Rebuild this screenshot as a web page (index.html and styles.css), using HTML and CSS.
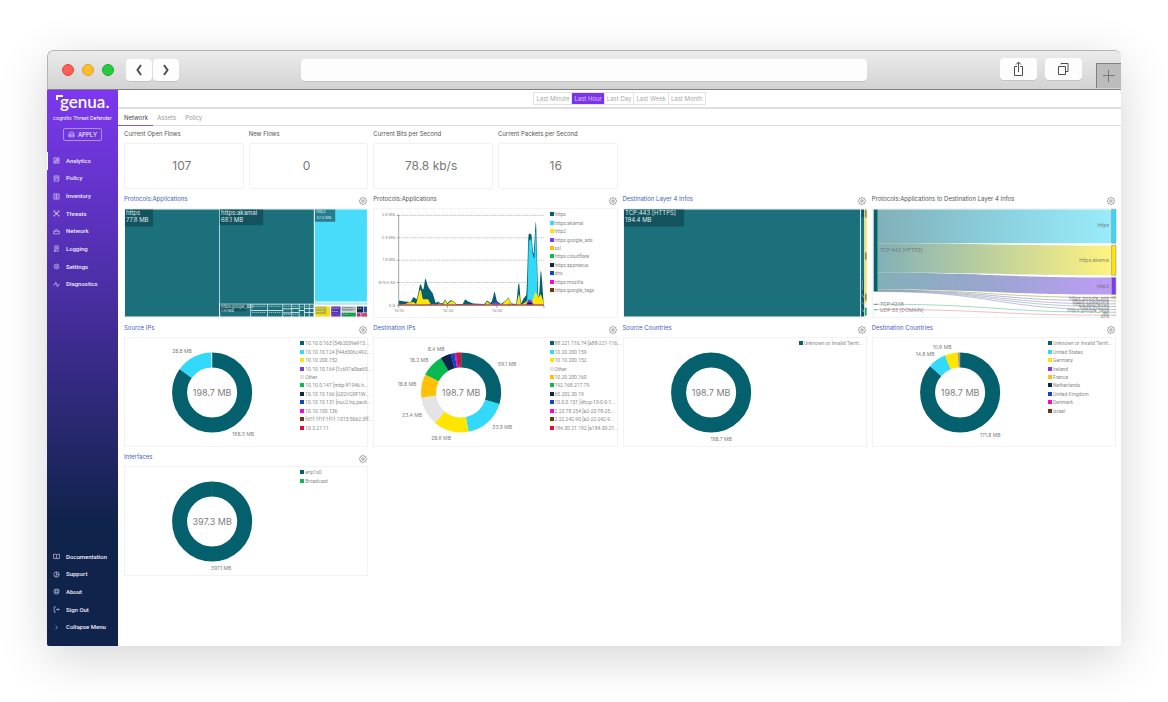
FILE: index.html
```html
<!DOCTYPE html>
<html lang="en">
<head>
<meta charset="utf-8">
<title>cognitix Threat Defender</title>
<link rel="stylesheet" href="styles.css">
</head>
<body>
<svg class="sprite" aria-hidden="true">
  <symbol id="gear" viewBox="0 0 24 24"><path d="M10.3 4.3c.4-1.8 2.9-1.8 3.4 0a1.7 1.7 0 0 0 2.6 1.1c1.5-.9 3.3.8 2.4 2.4a1.7 1.7 0 0 0 1 2.5c1.8.4 1.8 2.9 0 3.4a1.7 1.7 0 0 0-1 2.6c.9 1.5-.8 3.3-2.4 2.4a1.7 1.7 0 0 0-2.6 1c-.4 1.8-2.9 1.8-3.4 0a1.7 1.7 0 0 0-2.6-1c-1.5.9-3.3-.8-2.4-2.4a1.7 1.7 0 0 0-1-2.6c-1.8-.4-1.8-2.9 0-3.4a1.7 1.7 0 0 0 1-2.6c-.9-1.5.8-3.3 2.4-2.4 1 .6 2.3.1 2.6-1z"/><circle cx="12" cy="12" r="3"/></symbol>
  <symbol id="analytics" viewBox="0 0 24 24"><path d="M3 3h8v11H3zM14 3h7v6h-7zM14 12h7v9h-7zM3 17h8v4H3z"/></symbol>
  <symbol id="policy" viewBox="0 0 24 24"><path d="M4 3h16v8H4zM4 11v10h16V11M8 7h8M8 16h2M14 16h2"/></symbol>
  <symbol id="inventory" viewBox="0 0 24 24"><path d="M3 3h18v18H3zM12 3v18M6 8h3M6 12h3M6 16h3M15 8h3M15 12h3M15 16h3"/></symbol>
  <symbol id="threats" viewBox="0 0 24 24"><path d="M3 3l18 18M21 3L3 21M3 8V3h5M16 3h5v5M3 17v4h4M21 17v4h-4"/><circle cx="12" cy="12" r="4"/></symbol>
  <symbol id="network" viewBox="0 0 24 24"><path d="M2 11h20v9H2zM6 11c0-8 12-8 12 0M6 16h1"/></symbol>
  <symbol id="logging" viewBox="0 0 24 24"><path d="M6 3h12v18H6zM9 8h6M9 12h6M9 16h3M3 21h6"/></symbol>
  <symbol id="diagnostics" viewBox="0 0 24 24"><path d="M1 13h5l4-9 5 16 4-8h4"/></symbol>
  <symbol id="docs" viewBox="0 0 24 24"><path d="M2 4h8l2 2 2-2h8v15h-8l-2 2-2-2H2zM12 6v14"/></symbol>
  <symbol id="support" viewBox="0 0 24 24"><circle cx="12" cy="12" r="9"/><path d="M12 3v9h9M8 17h7"/></symbol>
  <symbol id="about" viewBox="0 0 24 24"><circle cx="12" cy="12" r="9"/><circle cx="12" cy="12" r="4"/><path d="M5 5l4 4M15 15l4 4M19 5l-4 4M9 15l-4 4"/></symbol>
  <symbol id="signout" viewBox="0 0 24 24"><path d="M10 3H4v18h6M10 12h11M17 8l4 4-4 4"/></symbol>
  <symbol id="chevron" viewBox="0 0 24 24"><path d="M9 6l6 6-6 6"/></symbol>
  <symbol id="apply" viewBox="0 0 24 24"><path d="M3 11l4-7h10l4 7v9H3zM3 11h18M3 16h18"/></symbol>
</svg>

<div class="window">
  <header class="titlebar">
    <div class="lights"><span class="light red"></span><span class="light amber"></span><span class="light green"></span></div>
    <div class="history">
      <button class="chrome-btn" aria-label="Back"><svg viewBox="0 0 12 16"><path d="M8 3L4.500 8 8 13" /></svg></button>
      <button class="chrome-btn" aria-label="Forward"><svg viewBox="0 0 12 16"><path d="M4 3l3.500 5L4 13"/></svg></button>
    </div>
    <input class="address" type="text" aria-label="Address">
    <div class="actions">
      <button class="chrome-btn wide thin" aria-label="Share"><svg viewBox="0 0 16 18"><path d="M6 6.500H3.500v9h8v-9H9M7.500 12V2M5 4.500L7.500 2 10 4.500"/></svg></button>
      <button class="chrome-btn wide thin" aria-label="Show tabs"><svg viewBox="0 0 16 18"><path d="M2.500 6.500h7v8h-7zM5 4.500V3.500h7v8h-2"/></svg></button>
    </div>
    <button class="new-tab" aria-label="New tab"><svg viewBox="0 0 12 12"><path d="M5.500 0v12M0 5.500h12"/></svg></button>
  </header>

  <div class="app">
    <aside class="sidebar">
      <div class="brand"><svg class="brand-mark" viewBox="0 0 8 6"><path d="M1 5V1h6"/></svg>genua.</div>
      <p class="product">cognitix Threat Defender</p>
      <button class="apply"><svg class="icon"><use href="#apply"/></svg>APPLY</button>
      <nav class="menu menu-main">
        <a class="current" href="#"><svg class="icon"><use href="#analytics"/></svg>Analytics</a>
        <a href="#"><svg class="icon"><use href="#policy"/></svg>Policy</a>
        <a href="#"><svg class="icon"><use href="#inventory"/></svg>Inventory</a>
        <a href="#"><svg class="icon"><use href="#threats"/></svg>Threats</a>
        <a href="#"><svg class="icon"><use href="#network"/></svg>Network</a>
        <a href="#"><svg class="icon"><use href="#logging"/></svg>Logging</a>
        <a href="#"><svg class="icon"><use href="#gear"/></svg>Settings</a>
        <a href="#"><svg class="icon"><use href="#diagnostics"/></svg>Diagnostics</a>
      </nav>
      <nav class="menu menu-foot">
        <a href="#"><svg class="icon"><use href="#docs"/></svg>Documentation</a>
        <a href="#"><svg class="icon"><use href="#support"/></svg>Support</a>
        <a href="#"><svg class="icon"><use href="#about"/></svg>About</a>
        <a href="#"><svg class="icon"><use href="#signout"/></svg>Sign Out</a>
        <a href="#"><svg class="icon"><use href="#chevron"/></svg>Collapse Menu</a>
      </nav>
    </aside>

    <main class="main">
      <div class="range-bar">
        <div class="range">
          <button>Last Minute</button><button class="selected">Last Hour</button><button>Last Day</button><button>Last Week</button><button>Last Month</button>
        </div>
      </div>
      <nav class="tabs"><a class="current" href="#">Network</a><a href="#">Assets</a><a href="#">Policy</a></nav>

      <div class="metrics">
        <section><h2>Current Open Flows</h2><p class="metric">107</p></section>
        <section><h2>New Flows</h2><p class="metric">0</p></section>
        <section><h2>Current Bits per Second</h2><p class="metric">78.8 kb/s</p></section>
        <section><h2>Current Packets per Second</h2><p class="metric">16</p></section>
      </div>

      <div class="widgets">
        <section>
          <header class="widget-head"><h2><a href="#">Protocols:Applications</a></h2><button class="gear" aria-label="Configure"><svg><use href="#gear"/></svg></button></header>
          <div class="card">
            <svg class="chart" viewBox="0 0 244 109">
              <g transform="translate(-6 -18) scale(.33333)">
                <g class="teal-tile">
                  <path d="M21 57h282v321H21zM305 57h282v283H305zM306 342h91v36h-91zM399 342h48v17h-48zM399 361h48v17h-48zM449 342h44v17h-44zM449 361h44v17h-44zM495 342h25v12h-25zM495 356h25v10h-25zM495 368h25v10h-25zM522 342h20v11h-20zM522 355h20v10h-20zM522 367h20v11h-20zM544 342h14v17h-14zM544 361h14v17h-14zM560 342h12v11h-12zM560 355h12v10h-12zM560 367h12v11h-12zM574 342h12v11h-12zM574 355h12v10h-12zM574 367h12v11h-12z"/>
                </g>
                <path fill="#48dcfa" d="M590 57h156v276H590z"/>
                <path fill="#8dd9e4" d="M590 336h156v6H590z"/>
                <path class="tile-lines" d="M592 339h152M402 347h42M402 366h42M452 347h38M452 366h38M497 347h21M524 347h16M546 349h10M562 347h8M576 347h8M497 371h21M524 371h16"/>
                <path fill="#f2dc1e" d="M591 348h45v30h-45z"/><path fill="#6c36c8" d="M639 348h28v30h-28z"/>
                <path fill="#b9b9b9" d="M670 348h43v15h-43z"/><path fill="#16a34f" d="M670 366h43v12h-43z"/>
                <path fill="#18274e" d="M716 348h19v18h-19z"/><path fill="#1d4c9e" d="M737 348h9v18h-9z"/>
                <path fill="#d311a8" d="M716 368h11v10h-11z"/><path fill="#b52f43" d="M729 368h17v10h-17z"/>
                <path class="label-back" d="M21 57h84v51H21zM305 57h130v47H305zM590 57h61v37h-61zM306 342h80v20h-80z"/>
                <path class="label-back soft" d="M592 348h32v22h-32zM640 348h25v20h-25zM671 349h32v11h-32zM671 367h26v9h-26zM718 349h14v15h-14z"/>
                <path class="tile-lines" d="M595 353h25M595 363h22M642 353h20M642 363h18M674 354h30M674 371h20M719 354h12M731 373h12"/>
              </g>
              <g class="tile-text"><text x="2" y="7">https</text><text x="2" y="14">77.8 MB</text><text x="97" y="7">https:akamai</text><text x="97" y="14">68.1 MB</text></g>
              <g class="tile-tiny"><text x="192" y="5">http2</text><text x="192" y="11">37.3 MB</text><text x="97" y="99">https:google_ads</text><text x="97" y="103">7.6 MB</text></g>
            </svg>
          </div>
        </section>

        <section>
          <header class="widget-head"><h2>Protocols:Applications</h2><button class="gear" aria-label="Configure"><svg><use href="#gear"/></svg></button></header>
          <div class="card">
            <svg class="chart" viewBox="0 0 176 109">
              <g transform="translate(-5 -18) scale(.33333)">
                <path class="gridline" d="M92 75h435M92 142h435M92 209h435M92 276h435"/>
                <path fill="#04606c" d="M92 344V330L110 333L128 334L136 319L146 326C152 310 154 281 157 281S162 297 165 297S170 265 172 265S178 285 182 292L194 309L203 337L210 333L216 338L224 338L231 327L238 338L247 329L256 331L264 340L284 340L291 326L300 333L315 339L348 340L357 330L367 337L371 332C376 320 377 304 379 304S383 325 387 332L398 340L410 332L421 321L430 339L444 340C448 320 449 278 452 278S456 330 459 338L466 324L474 314C478 280 479 130 482 130S487 130 489 132S494 190 496 190S501 95 503 95S508 310 511 318S516 240 518 240S525 320 527 344z"/>
                <path fill="#32d9f8" d="M470 344L477 328C480 280 480 150 483 150S487 145 489 147S492 187 494 192S497 205 498 205S502 122 503 122S507 290 508 310L516 344z"/>
                <path fill="#ffe600" d="M92 344L110 341L126 336L136 334L144 340C150 325 154 297 157 297S162 322 165 326L180 326L188 340L205 343L211 339L224 343L231 329L238 341L248 332L257 333L264 343H349L357 333L367 341L386 338L400 343L421 322L431 343H445C448 330 450 312 452 312S456 335 459 343L470 336L479 330L490 337L502 303L510 321L518 311L526 336V344z"/>
                <path fill="#ffc107" d="M92 343L112 341L123 334L133 343zM352 343L358 338L367 343z"/>
                <path fill="#7c3aed" d="M181 343L188 338L194 343zM371 343L378 335L389 336L394 343zM417 343L423 338L427 343zM474 340L481 327L490 329L496 342z"/>
                <path fill="#12234b" d="M473 343L481 334L491 337L496 343z"/>
                <path fill="#e63a4f" d="M92 341h435v3H92z"/>
                <path class="axis" d="M92 72v273h435M86 75h6M86 142h6M86 209h6M86 276h6M86 344h6M92 344v8M238 344v8M386 344v8M527 344v8"/>
              </g>
              <g class="axis-text end"><text x="22" y="8">3.9 MB</text><text x="22" y="31">2.9 MB</text><text x="22" y="53">1.9 MB</text><text x="22" y="75">976.6 kB</text><text x="22" y="98">0 B</text></g>
              <g class="axis-text"><text x="26" y="103">10:10</text><text x="75" y="103">10:30</text><text x="124" y="103">10:50</text></g>
            </svg>
            <ul class="legend">
              <li class="teal">https</li><li class="cyan">https:akamai</li><li class="yellow">http2</li><li class="violet">https:google_ads</li><li class="orange">ssl</li><li class="emerald">https:cloudflare</li><li class="navy">https:appnexus</li><li class="blue">dns</li><li class="magenta">https:mozilla</li><li class="brown">https:google_tags</li>
            </ul>
          </div>
        </section>

        <section>
          <header class="widget-head"><h2><a href="#">Destination Layer 4 Infos</a></h2><button class="gear" aria-label="Configure"><svg><use href="#gear"/></svg></button></header>
          <div class="card">
            <svg class="chart" viewBox="0 0 244 109">
              <g transform="translate(-4 -18) scale(.33333)">
                <g class="teal-tile"><path d="M15 57h708v321H15zM725 57h10v321h-10z"/></g>
                <path class="label-back" d="M15 57h180v51H15zM727 58h7v22h-7zM727 268h7v108h-7z"/>
                <path fill="#ffe53a" d="M737 57h5v282h-5z"/><path fill="#a38b21" d="M737 58h5v23h-5zM737 186h5v22h-5zM737 310h5v20h-5z"/>
                <path fill="#16a34f" d="M737 351h5v24h-5z"/>
                <path class="tile-lines" d="M724 57v321M730 270v28M728 312l6 8M728 336l6 5M728 356l6 8"/>
              </g>
              <g class="tile-text"><text x="2" y="7">TCP:443 [HTTPS]</text><text x="2" y="14">194.4 MB</text></g>
            </svg>
          </div>
        </section>

        <section>
          <header class="widget-head"><h2>Protocols:Applications to Destination Layer 4 Infos</h2><button class="gear" aria-label="Configure"><svg><use href="#gear"/></svg></button></header>
          <div class="card">
            <svg class="chart" viewBox="0 0 244 109">
              <defs>
                <linearGradient id="flow-cyan"><stop stop-color="#82b0b7"/><stop offset=".5" stop-color="#8acfdc"/><stop offset="1" stop-color="#99ecfb"/></linearGradient>
                <linearGradient id="flow-yellow"><stop stop-color="#82b0b7"/><stop offset=".5" stop-color="#c0d29c"/><stop offset="1" stop-color="#fff280"/></linearGradient>
                <linearGradient id="flow-violet"><stop stop-color="#82b0b7"/><stop offset=".5" stop-color="#9ca5d2"/><stop offset="1" stop-color="#bd9cf6"/></linearGradient>
              </defs>
              <g transform="translate(-5 -18) scale(.33333)">
                <path fill="url(#flow-cyan)" d="M32 57H733V158H32z"/>
                <path fill="url(#flow-yellow)" d="M32 158C380 158 380 165 733 165V254C380 254 380 247 32 247z"/>
                <path fill="url(#flow-violet)" d="M32 247C380 247 380 261 733 261V312C380 312 380 297 32 297z"/>
                <path fill="#82b0b7" d="M32 297C100 297 150 299 190 303L32 303z"/>
                <g class="flows">
                  <path stroke="#b7ad4c" d="M32 299C380 299 380 321 733 321"/>
                  <path stroke="#7fa1c9" d="M32 300C380 300 380 331 733 331"/>
                  <path stroke="#bc92d2" d="M32 301C380 301 380 340 733 340"/>
                  <path stroke="#8fb6a4" d="M32 302C380 302 380 348 733 348"/>
                  <path stroke="#99a2cb" d="M32 303C380 303 380 357 733 357"/>
                  <path stroke="#76c59e" d="M32 341C380 341 380 365 733 365"/>
                  <path stroke="#ec9bab" d="M32 357C380 357 380 374 733 374"/>
                </g>
                <path fill="#04606c" d="M20 57h12v246H20z"/><path fill="#7a9a9a" d="M20 340h12v3H20zM20 356h12v3H20z"/>
                <g class="nodes"><path fill="#32d9f8" d="M733 57h13v101h-13z"/><path fill="#ffe600" d="M733 165h13v89h-13z"/><path fill="#7c3aed" d="M733 261h13v51h-13z"/><path fill="#ffc107" d="M733 319h13v4h-13z"/><path d="M733 331h13M733 340h13M733 348h13M733 357h13M733 365h13M733 374h13"/></g>
              </g>
              <g class="flow-text"><text x="8" y="44">TCP:443 [HTTPS]</text><text x="8" y="97">TCP:4206</text><text x="8" y="103">UDP:53 [DOMAIN]</text></g>
              <g class="flow-text end"><text x="237" y="19">https</text><text x="237" y="54">https:akamai</text><text x="237" y="79">http2</text><text x="237" y="91">https:google_ads</text><text x="237" y="94">https:cloudflare</text><text x="237" y="97">https:appnexus</text><text x="237" y="100">https:mozilla</text><text x="237" y="103">https:google_tags</text><text x="237" y="106">ssl</text><text x="237" y="109">dns</text></g>
            </svg>
          </div>
        </section>

        <section>
          <header class="widget-head"><h2><a href="#">Source IPs</a></h2><button class="gear" aria-label="Configure"><svg><use href="#gear"/></svg></button></header>
          <div class="card">
            <svg class="chart" viewBox="0 0 176 109">
              <g class="ring" transform="rotate(-90 88 55)">
                <circle class="teal" cx="88" cy="55" r="32.5" pathLength="100" stroke-dasharray="85 15"/>
                <circle class="cyan" cx="88" cy="55" r="32.5" pathLength="100" stroke-dasharray="14.8 85.2" stroke-dashoffset="-84.9"/>
                <circle class="grey" cx="88" cy="55" r="32.5" pathLength="100" stroke-dasharray=".3 99.7" stroke-dashoffset="-99.7"/>
              </g>
              <text class="total" x="88" y="58">198.7 MB</text>
              <g class="slice-text"><text x="58" y="16">28.8 MB</text><text x="119" y="98">168.3 MB</text></g>
            </svg>
            <ul class="legend">
              <li class="teal">10.10.0.163 [54b2039e913...</li><li class="cyan">10.10.10.124 [f44d306c492...</li><li class="yellow">10.10.200.152</li><li class="violet">10.10.10.164 [1c697a0be65...</li><li class="grey">Other</li><li class="emerald">10.10.0.147 [mbp-lf1946.h...</li><li class="navy">10.10.10.166 [G02VQ0F1W...</li><li class="blue">10.10.10.131 [nuc2.hq.pack...</li><li class="magenta">10.10.100.136</li><li class="brown">fd1f:1f1f:1f1f::1013:56b2:3ff...</li><li class="red">10.3.21.11</li>
            </ul>
          </div>
        </section>

        <section>
          <header class="widget-head"><h2><a href="#">Destination IPs</a></h2><button class="gear" aria-label="Configure"><svg><use href="#gear"/></svg></button></header>
          <div class="card">
            <svg class="chart" viewBox="0 0 176 109">
              <g class="ring" transform="rotate(-90 88 55)">
                <circle class="teal" cx="88" cy="55" r="32.5" pathLength="100" stroke-dasharray="29.8 70.2"/>
                <circle class="cyan" cx="88" cy="55" r="32.5" pathLength="100" stroke-dasharray="17.3 82.7" stroke-dashoffset="-29.7"/>
                <circle class="yellow" cx="88" cy="55" r="32.5" pathLength="100" stroke-dasharray="14.4 85.6" stroke-dashoffset="-47"/>
                <circle class="grey" cx="88" cy="55" r="32.5" pathLength="100" stroke-dasharray="11.8 88.2" stroke-dashoffset="-61.3"/>
                <circle class="orange" cx="88" cy="55" r="32.5" pathLength="100" stroke-dasharray="9.5 90.5" stroke-dashoffset="-73"/>
                <circle class="emerald" cx="88" cy="55" r="32.5" pathLength="100" stroke-dasharray="9.4 90.6" stroke-dashoffset="-82.4"/>
                <circle class="navy" cx="88" cy="55" r="32.5" pathLength="100" stroke-dasharray="4.2 95.8" stroke-dashoffset="-91.6"/>
                <circle class="blue" cx="88" cy="55" r="32.5" pathLength="100" stroke-dasharray="1.7 98.3" stroke-dashoffset="-95.7"/>
                <circle class="magenta" cx="88" cy="55" r="32.5" pathLength="100" stroke-dasharray="1 99" stroke-dashoffset="-97.3"/>
                <circle class="brown" cx="88" cy="55" r="32.5" pathLength="100" stroke-dasharray=".8 99.2" stroke-dashoffset="-98.2"/>
                <circle class="red" cx="88" cy="55" r="32.5" pathLength="100" stroke-dasharray="1.1 98.9" stroke-dashoffset="-98.9"/>
              </g>
              <text class="total" x="88" y="58">198.7 MB</text>
              <g class="slice-text"><text x="63" y="14">8.4 MB</text><text x="46" y="25">18.2 MB</text><text x="34" y="49">18.8 MB</text><text x="39" y="79">23.4 MB</text><text x="68" y="102">28.6 MB</text><text x="129" y="91">33.9 MB</text><text x="134" y="29">59.1 MB</text></g>
            </svg>
            <ul class="legend">
              <li class="teal">88.221.116.74 [a88-221-116...</li><li class="cyan">10.20.200.159</li><li class="yellow">10.10.200.152</li><li class="grey">Other</li><li class="orange">10.20.200.160</li><li class="emerald">192.168.217.79</li><li class="navy">65.202.30.19</li><li class="blue">10.0.0.151 [dhcp-10-0-0-1...</li><li class="magenta">2.23.78.254 [a2-23-78-25...</li><li class="brown">2.22.242.90 [a2-22-242-9...</li><li class="red">184.30.21.192 [a184-30-21...</li>
            </ul>
          </div>
        </section>

        <section>
          <header class="widget-head"><h2><a href="#">Source Countries</a></h2><button class="gear" aria-label="Configure"><svg><use href="#gear"/></svg></button></header>
          <div class="card">
            <svg class="chart" viewBox="0 0 176 109">
              <g class="ring"><circle class="teal" cx="88" cy="55" r="32.5"/></g>
              <text class="total" x="88" y="58">198.7 MB</text>
              <g class="slice-text"><text x="98" y="103">198.7 MB</text></g>
            </svg>
            <ul class="legend"><li class="teal">Unknown or Invalid Territ...</li></ul>
          </div>
        </section>

        <section>
          <header class="widget-head"><h2><a href="#">Destination Countries</a></h2><button class="gear" aria-label="Configure"><svg><use href="#gear"/></svg></button></header>
          <div class="card">
            <svg class="chart" viewBox="0 0 176 109">
              <g class="ring" transform="rotate(-90 88 55)">
                <circle class="teal" cx="88" cy="55" r="32.5" pathLength="100" stroke-dasharray="86.5 13.5"/>
                <circle class="cyan" cx="88" cy="55" r="32.5" pathLength="100" stroke-dasharray="7.500 92.500" stroke-dashoffset="-86.4"/>
                <circle class="yellow" cx="88" cy="55" r="32.5" pathLength="100" stroke-dasharray="5.2 94.8" stroke-dashoffset="-93.8"/>
                <circle class="brown faint" cx="88" cy="55" r="32.5" pathLength="100" stroke-dasharray="1 99" stroke-dashoffset="-99"/>
              </g>
              <text class="total" x="88" y="58">198.7 MB</text>
              <g class="slice-text"><text x="53" y="19">14.8 MB</text><text x="70" y="12">10.6 MB</text><text x="118" y="99">171.8 MB</text></g>
            </svg>
            <ul class="legend">
              <li class="teal">Unknown or Invalid Territ...</li><li class="cyan">United States</li><li class="yellow">Germany</li><li class="violet">Ireland</li><li class="orange">France</li><li class="navy">Netherlands</li><li class="blue">United Kingdom</li><li class="magenta">Denmark</li><li class="brown">Israel</li>
            </ul>
          </div>
        </section>

        <section>
          <header class="widget-head"><h2><a href="#">Interfaces</a></h2><button class="gear" aria-label="Configure"><svg><use href="#gear"/></svg></button></header>
          <div class="card">
            <svg class="chart" viewBox="0 0 176 109">
              <g class="ring" transform="rotate(-90 88 55)">
                <circle class="teal" cx="88" cy="55" r="32.5" pathLength="100"/>
                <circle class="emerald faint" cx="88" cy="55" r="32.5" pathLength="100" stroke-dasharray=".3 99.7" stroke-dashoffset="-99.8"/>
              </g>
              <text class="total" x="88" y="58">397.3 MB</text>
              <g class="slice-text"><text x="97" y="103">397.1 MB</text></g>
            </svg>
            <ul class="legend"><li class="teal">enp1s0</li><li class="emerald">Broadcast</li></ul>
          </div>
        </section>
      </div>
    </main>
  </div>
</div>
</body>
</html>
```
FILE: styles.css
```css
* { box-sizing: border-box; }

body {
  margin: 0;
  min-height: 100vh;
  padding: 50px 47px 56px;
  display: flex;
  background: #fff;
  font-family: Inter, "Liberation Sans", sans-serif;
  font-size: 6px;
  line-height: 8px;
  color: #555;
}

h2, p, ul { margin: 0; padding: 0; font-weight: 400; font-size: inherit; }
a { color: inherit; text-decoration: none; }
button { font: inherit; color: inherit; border: 0; padding: 0; background: none; }
svg { display: block; }
.sprite { position: absolute; width: 0; height: 0; }

.window {
  flex: 1;
  min-width: 0;
  display: flex;
  flex-direction: column;
  border-radius: 6px 6px 2px 2px;
  box-shadow: 0 12px 48px rgba(0, 0, 0, .17);
  overflow: hidden;
  background: #fff;
}

/* browser chrome */
.titlebar {
  height: 40px;
  display: flex;
  align-items: center;
  padding-left: 14px;
  background: linear-gradient(#ebebeb, #d3d3d3);
  border: 1px solid #b4b4b4;
  border-width: 1px 0 1px 1px;
  border-bottom-color: #808080;
  border-radius: 6px 6px 0 0;
}
.lights { display: flex; gap: 8px; }
.light { width: 12px; height: 12px; border-radius: 50%; border: 1px solid; }
.light.red { background: #ff5f57; border-color: #e2463f; }
.light.amber { background: #ffbd2e; border-color: #dfa023; }
.light.green { background: #28ca41; border-color: #1aab2c; }
.history { display: flex; gap: 1px; margin-left: 12px; }
.chrome-btn {
  width: 26px;
  height: 22px;
  display: grid;
  place-items: center;
  background: #fdfdfd;
  border-radius: 4px;
  box-shadow: 0 1px 0 #c4c4c4;
}
.chrome-btn svg { width: 12px; height: 16px; fill: none; stroke: #4d4d4d; stroke-width: 2; }
.chrome-btn.wide { width: 37px; }
.chrome-btn.thin svg { width: 16px; height: 18px; stroke-width: 1; }
.address {
  flex: 1;
  min-width: 0;
  height: 22px;
  margin: 0 133px 0 122px;
  padding: 0 8px;
  border: 0;
  border-radius: 4px;
  background: #fdfdfd;
  box-shadow: 0 1px 0 #c4c4c4;
}
.actions { display: flex; gap: 8px; margin: 0 14px 2px 0; }
.new-tab {
  width: 25px;
  height: 25px;
  align-self: flex-end;
  display: grid;
  place-items: center;
  margin-bottom: 1px;
  background: #bcbcbc;
  border: 1px solid #808080;
  border-width: 1px 0 0 1px;
}
.new-tab svg { width: 12px; height: 12px; stroke: #777; }

.app { flex: 1; display: flex; }

/* sidebar */
.sidebar {
  width: 71px;
  flex: none;
  display: flex;
  flex-direction: column;
  color: #fff;
  background: linear-gradient(#7c38ef, #10234b 78%);
}
.brand {
  position: relative;
  margin: 1px 0 0 13px;
  font: 600 17px/21px Lato, sans-serif;
}
.brand-mark {
  position: absolute;
  left: -4px;
  top: 4px;
  width: 8px;
  height: 6px;
  fill: none;
  stroke: #fff;
  stroke-width: 2;
}
.product { text-align: center; font-size: 5px; padding-top: 2px; white-space: nowrap; }
.apply {
  align-self: center;
  display: flex;
  align-items: center;
  justify-content: center;
  gap: 3px;
  width: 39px;
  height: 13px;
  margin-top: 6px;
  border: 1px solid #b08df5;
  border-radius: 2px;
}
.icon { width: 7px; height: 7px; fill: none; stroke: #e9e2fb; stroke-width: 2; }
.menu { display: grid; grid-auto-rows: 1fr; }
.menu a {
  display: flex;
  align-items: center;
  gap: 6px;
  padding-left: 6px;
  color: #f1edfb;
  font-family: Roboto, "Liberation Sans", sans-serif;
  font-weight: 500;
  white-space: nowrap;
}
.menu-main { height: 141px; margin-top: 11px; }
.menu-foot { height: 88px; margin: auto 0 10px; }
.menu-main .current { box-shadow: inset 1px 0 0 #fff; }

/* page header */
.main { flex: 1; min-width: 0; background: #fff; }
.range-bar { display: flex; justify-content: center; padding: 2px 0; height: 19px; border-bottom: 2px solid #dedede; }
.range { display: flex; height: 13px; border: 1px solid #e3e3e3; }
.range button { padding: 0 2px; color: #aaa; border-left: 1px solid #e3e3e3; }
.range button:first-child { border-left: 0; }
.range .selected { background: #7c33ee; color: #d9c6fb; }
.tabs { display: flex; height: 17px; border-bottom: 1px solid #dedede; color: #999; }
.tabs a { padding: 5px 5px 0 4px; }
.tabs .current { padding: 5px 5px 0 6px; color: #444; box-shadow: 0 1px 0 #7c5cdf; }

/* metrics */
.metrics { display: grid; grid-template-columns: repeat(8, minmax(0, 1fr)); gap: 5px; padding: 0 5px 0 6px; }
.metrics h2 { height: 17px; padding-top: 4px; white-space: nowrap; }
.metric {
  display: grid;
  place-items: center;
  height: 46px;
  padding-right: 4px;
  border: 1px solid #f1f1f1;
  border-radius: 2px;
  font-size: 12px;
  line-height: 14px;
  color: #777;
}

/* widgets */
.widgets { display: grid; grid-template-columns: repeat(4, minmax(0, 1fr)); column-gap: 5px; padding: 0 5px 0 6px; }
.widget-head { display: flex; justify-content: space-between; height: 19px; padding-top: 5px; }
.widget-head h2 { white-space: nowrap; padding-top: 1px; }
.widget-head h2 a { color: #3f62bf; }
.gear { width: 10px; height: 10px; margin-top: 2px; }
.gear svg { width: 10px; height: 10px; fill: none; stroke: #8c8c8c; stroke-width: 2; }
.card { display: flex; min-height: 110px; box-shadow: inset 0 0 0 1px #f3f3f3; }
.chart { flex: 1; min-width: 0; width: 100%; overflow: visible; }
.legend {
  width: 68px;
  height: 95px;
  flex: none;
  display: grid;
  grid-template-rows: repeat(11, 1fr);
  align-items: center;
  padding-top: 2px;
  list-style: none;
  font: 5px/8px Roboto, "Liberation Sans", sans-serif;
  color: #8a8a8a;
}
.legend li { display: flex; align-items: center; gap: 1px; white-space: nowrap; }
.legend li::before { content: ""; flex: none; width: 4px; height: 4px; background: var(--tone); }

.teal { --tone: #04606c; }
.cyan { --tone: #32d9f8; }
.yellow { --tone: #ffe600; }
.violet { --tone: #7c3aed; }
.grey { --tone: #e4e4e4; }
.orange { --tone: #ffc107; }
.emerald { --tone: #08b950; }
.navy { --tone: #10234b; }
.blue { --tone: #0b47c4; }
.magenta { --tone: #fb06cd; }
.brown { --tone: #6b3a0b; }
.red { --tone: #e8073f; }

.ring circle { fill: none; stroke: var(--tone); stroke-width: 15; }
.ring .faint { opacity: .5; }
.total { font-size: 9px; text-anchor: middle; fill: #808080; }
.slice-text { font-size: 5px; text-anchor: middle; fill: #808080; }

.teal-tile { fill: #1b707c; }
.label-back { fill: #0d3f49; fill-opacity: .6; }
.label-back.soft { fill-opacity: .25; }
.tile-lines { fill: none; stroke: #fff; stroke-opacity: .55; stroke-width: 3; stroke-dasharray: 4 2; }
.tile-text { font-size: 6px; fill: #dfeaec; }
.tile-tiny { font-size: 4px; fill: #dfeaec; }

.gridline { stroke: #a5a5a5; stroke-width: 2; stroke-dasharray: 5 3; }
.axis { fill: none; stroke: #777; stroke-width: 2; }
.axis-text { font-size: 4px; fill: #888; text-anchor: middle; }
.flows { fill: none; stroke-width: 2; }
.nodes { stroke: #999; stroke-width: 2; }
.flow-text { font-size: 5px; fill: #666; fill-opacity: .8; }
.axis-text.end, .flow-text.end { text-anchor: end; }
```
